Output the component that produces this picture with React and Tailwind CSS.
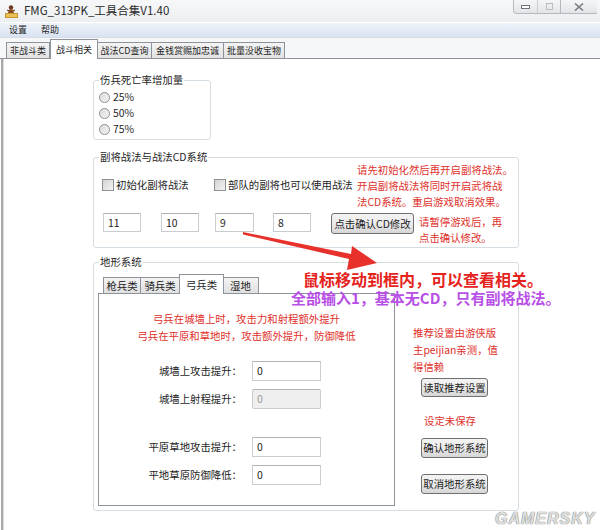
import React from 'react'

const mainTabs = [
  { label: '非战斗类', w: 'w-[44px]' },
  { label: '战斗相关', w: 'w-[48px]', active: true },
  { label: '战法CD查询', w: 'w-[55px]' },
  { label: '金钱赏赐加忠诚', w: 'w-[73px]' },
  { label: '批量没收宝物', w: 'w-[62px]' },
]

const terrainTabs = [
  { label: '枪兵类', w: 'w-[38px]' },
  { label: '骑兵类', w: 'w-[40px]' },
  { label: '弓兵类', w: 'w-[45px]', active: true },
  { label: '湿地', w: 'w-[37px]' },
]

const AppIcon = () => (
  <svg width="15" height="15" viewBox="0 0 15 15">
    <rect x="1" y="9" width="13" height="5" fill="#c9962e" />
    <rect x="2" y="10" width="11" height="3" fill="#e8c15a" />
    <circle cx="7" cy="3.5" r="2.2" fill="#6b3a1a" />
    <path d="M4 9 L5 5.5 L9 5.5 L10 9 Z" fill="#8a4b22" />
    <path d="M3 6 L5 7 M11 6 L9 7" stroke="#5a2e12" strokeWidth="1" />
  </svg>
)

const WindowButtons = () => (
  <div className="flex h-[14px] self-start">
    <div className="flex w-[48px] border border-t-0 border-[#b5b9bf] rounded-bl-[4px] bg-gradient-to-b from-[#f4f5f6] to-[#e2e5e8]">
      <div className="flex w-[24px] items-center justify-center border-r border-[#c9ccd0]">
        <div className="w-[9px] h-[4px] border border-[#6f7378] bg-white" />
      </div>
      <div className="flex flex-1 items-center justify-center">
        <div className="w-[7px] h-[7px] border border-[#b9bcc0]" />
      </div>
    </div>
    <div className="flex w-[36px] items-center justify-center border-b border-[#b5b9bf] bg-gradient-to-b from-[#f4f5f6] to-[#e2e5e8]">
      <svg width="10" height="8" viewBox="0 0 10 8">
        <path d="M1 0.5 L9 7.5 M9 0.5 L1 7.5" stroke="#7a7d82" strokeWidth="1.6" />
      </svg>
    </div>
  </div>
)

const Radio = ({ label }) => (
  <div className="flex h-4 items-center gap-[3px] pl-[5px]">
    <span className="w-[11px] h-[11px] rounded-full border border-[#8e9195] bg-gradient-to-br from-[#d9d9d9] to-[#f7f7f7]" />
    <span>{label}</span>
  </div>
)

const Checkbox = ({ label, className }) => (
  <div className={`flex h-4 items-center gap-[2px] ${className}`}>
    <span className="w-[12px] h-[12px] border border-[#8e9195] bg-gradient-to-br from-[#d4d4d4] to-[#f4f4f4]" />
    <span>{label}</span>
  </div>
)

const TextBox = ({ value, className, disabled }) => (
  <div
    className={`flex items-center pl-[4px] border border-[#c9cdd2] border-t-[#b0b4ba] ${
      disabled ? 'bg-[#efefef] text-[#9a9a9a]' : 'bg-white'
    } ${className}`}
  >
    {value}
  </div>
)

const Button = ({ children, className }) => (
  <div
    className={`flex items-center justify-center rounded-[3px] border border-[#707070] bg-gradient-to-b from-[#f3f3f3] via-[#ebebeb] to-[#d6d6d6] ${className}`}
  >
    {children}
  </div>
)

const Group = ({ title, className, children }) => (
  <fieldset className={`border border-[#d5dde3] rounded-[3px] ${className}`}>
    <legend className="ml-[5px] px-[1px] leading-4">{title}</legend>
    {children}
  </fieldset>
)

export default function App() {
  return (
    <div className="relative w-[600px] h-[530px] overflow-hidden bg-white text-[10.4px] text-[#1e1e1e] font-['Noto_Sans_CJK_SC','Noto_Sans',sans-serif]">
      {/* title bar */}
      <div className="flex h-[22px] bg-gradient-to-b from-[#f7f8f9] to-[#eceef0]">
        <div className="flex flex-1 items-center gap-[5px] pl-[4px]">
          <AppIcon />
          <span className="text-[11.5px] text-[#2a2a2a]">FMG_313PK_工具合集V1.40</span>
        </div>
        <WindowButtons />
        <div className="w-[3px]" />
      </div>

      {/* menu bar */}
      <div className="flex h-[16px] items-center gap-[14px] pl-[9px] text-[9px] border-t border-white bg-gradient-to-b from-[#eef3fa] to-[#d9e3f1] border-b border-b-[#d6dde7]">
        <span>设置</span>
        <span>帮助</span>
      </div>

      {/* main tabs */}
      <div className="flex h-[21px] items-end pl-[6px] bg-[#f6f7f8] border-b border-[#8e929a] text-[9px]">
        {mainTabs.map((t) => (
          <div
            key={t.label}
            className={`flex items-center justify-center border border-b-0 border-[#8e929a] ${t.w} ${
              t.active
                ? 'relative z-10 -mb-px h-[20px] bg-white'
                : 'h-[16px] bg-gradient-to-b from-[#f4f4f4] to-[#e2e2e2] -ml-px first:ml-0'
            }`}
          >
            {t.label}
          </div>
        ))}
      </div>

      {/* tab page */}
      <div className="flex h-[471px] ml-[1px] border-l-[2px] border-[#a9a9a9]">
        <div className="flex flex-1 flex-col pl-[89px] pt-[13px] border-l border-[#dcdcdc]">
          <Group title="伤兵死亡率增加量" className="w-[118px] h-[68px]">
            <div className="pt-[1px]">
              <Radio label="25%" />
              <Radio label="50%" />
              <Radio label="75%" />
            </div>
          </Group>

          <Group title="副将战法与战法CD系统" className="mt-[9px] w-[426px] h-[99px]">
            <div className="flex h-[48px]">
              <Checkbox label="初始化副将战法" className="ml-[8px] mt-[12px] w-[112px]" />
              <Checkbox label="部队的副将也可以使用战法" className="mt-[12px] w-[143px]" />
              <div className="-mt-[3px] leading-4 text-[#e0302a]">
                请先初始化然后再开启副将战法。
                <br />
                开启副将战法将同时开启武将战
                <br />
                法CD系统。重启游戏取消效果。
              </div>
            </div>
            <div className="flex items-start">
              <TextBox value="11" className="ml-[9px] w-[38px] h-[19px]" />
              <TextBox value="10" className="ml-[20px] w-[38px] h-[19px]" />
              <TextBox value="9" className="ml-[16px] w-[39px] h-[19px]" />
              <TextBox value="8" className="ml-[19px] w-[38px] h-[19px]" />
              <Button className="ml-[20px] w-[83px] h-[21px]">点击确认CD修改</Button>
              <div className="ml-[5px] mt-[1px] leading-4 text-[#e0302a]">
                请暂停游戏后，再
                <br />
                点击确认修改。
              </div>
            </div>
          </Group>

          <Group title="地形系统" className="mt-[6px] w-[426px] h-[257px]">
            <div className="flex">
              <div className="ml-[4px] mt-[4px] w-[297px]">
                <div className="flex h-[19px] items-end pl-[5px]">
                  {terrainTabs.map((t) => (
                    <div
                      key={t.label}
                      className={`flex items-center justify-center border border-b-0 border-[#8e929a] ${t.w} ${
                        t.active
                          ? 'relative z-10 -mb-px -mx-[1px] h-[20px] bg-white'
                          : 'h-[16px] bg-gradient-to-b from-[#f4f4f4] to-[#e0e0e0] -ml-px first:ml-0'
                      }`}
                    >
                      {t.label}
                    </div>
                  ))}
                </div>
                <div className="h-[213px] border border-[#8e929a] bg-white">
                  <div className="pt-[16px] text-center leading-[17px] text-[#e0302a]">
                    弓兵在城墙上时，攻击力和射程额外提升
                    <br />
                    弓兵在平原和草地时，攻击额外提升，防御降低
                  </div>
                  <div className="mt-[17px] flex flex-col">
                    <div className="flex h-[20px] items-center">
                      <span className="w-[143px] text-right">城墙上攻击提升：</span>
                      <TextBox value="0" className="ml-[10px] w-[69px] h-[20px]" />
                    </div>
                    <div className="mt-[8px] flex h-[20px] items-center">
                      <span className="w-[143px] text-right">城墙上射程提升：</span>
                      <TextBox value="0" disabled className="ml-[10px] w-[69px] h-[20px] rounded-[2px]" />
                    </div>
                    <div className="mt-[28px] flex h-[20px] items-center">
                      <span className="w-[143px] text-right">平原草地攻击提升：</span>
                      <TextBox value="0" className="ml-[10px] w-[69px] h-[20px]" />
                    </div>
                    <div className="mt-[8px] flex h-[20px] items-center">
                      <span className="w-[143px] text-right">平地草原防御降低：</span>
                      <TextBox value="0" className="ml-[10px] w-[69px] h-[20px]" />
                    </div>
                  </div>
                </div>
              </div>

              <div className="ml-[18px] mt-[54px] flex w-[86px] flex-col">
                <div className="leading-[17px] text-[#e0302a]">推荐设置由游侠版主peijian亲测，值得信赖</div>
                <Button className="ml-[8px] mt-[3px] w-[67px] h-[19px]">读取推荐设置</Button>
                <div className="ml-[11px] mt-[16px] leading-4 text-[#e0302a]">设定未保存</div>
                <Button className="ml-[8px] mt-[9px] w-[67px] h-[20px]">确认地形系统</Button>
                <Button className="ml-[8px] mt-[16px] w-[67px] h-[20px]">取消地形系统</Button>
              </div>
            </div>
          </Group>
        </div>
      </div>

      {/* annotation arrow */}
      <svg className="pointer-events-none absolute left-0 top-0" width="600" height="530">
        <polygon
          points="243,232 351,254 352,246 377,263 347,270 349,259 243,234.5"
          fill="#e8312b"
        />
      </svg>

      {/* annotation notes */}
      <div className="absolute left-[303px] top-[271px] text-[16px] font-bold leading-[17px] text-[#e5231c]">
        鼠标移动到框内，可以查看相关。
      </div>
      <div className="absolute left-[291px] top-[290px] text-[15px] font-bold leading-[16px] text-[#b84fe6]">
        全部输入1，基本无CD，只有副将战法。
      </div>

      {/* watermark */}
      <div className="absolute left-[495px] top-[507px] text-[16px] font-bold italic tracking-[1px] text-[#dedede] font-['Liberation_Sans',sans-serif] [text-shadow:0_0_1px_#7d7d7d,0_0_1px_#7d7d7d]">
        GAMERSKY
      </div>
    </div>
  )
}
